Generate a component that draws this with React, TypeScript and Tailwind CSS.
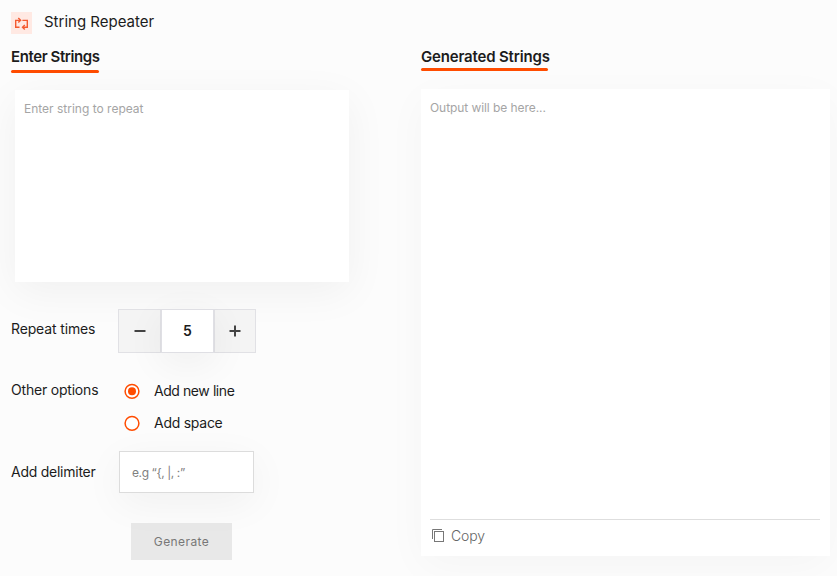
import { useState } from "react";

const options = [
  { id: "line", label: "Add new line", className: "tracking-[-0.43px]" },
  { id: "space", label: "Add space", className: "tracking-[-0.26px]" },
];

const RepeatSvg: React.FC = () => (
  <svg width="15" height="15" viewBox="0 0 15 15" fill="none" stroke="#f45a30" strokeWidth="1.4">
    <path d="M5.5 11.3H1.7V4.4H6" />
    <path d="M4.3 1.9L6.6 4.3L4.3 6.5" />
    <path d="M8.4 4.4H13.3V11.3H9" />
    <path d="M10.8 9L8.5 11.3L10.8 13.6" />
  </svg>
);

const CopySvg: React.FC = () => (
  <svg width="13" height="14" viewBox="0 0 13 14" fill="none" stroke="#777777">
    <path d="M0.5 10V0.5H10" />
    <rect x="2.5" y="2.5" width="9" height="10" />
  </svg>
);

const App: React.FC = () => {
  const [text, setText] = useState("");
  const [count, setCount] = useState(5);
  const [option, setOption] = useState("line");
  const [delimiter, setDelimiter] = useState("");

  return (
    <div className="h-[576px] w-[837px] overflow-hidden bg-[#fcfcfc] pt-3 pl-[11px] font-['Inter',sans-serif] text-[#1c1c1c]">
      <header className="flex h-[22px] items-center gap-3">
        <span className="flex h-[22px] w-[21px] items-center justify-center bg-[#ffe9e3]">
          <RepeatSvg />
        </span>
        <h1 className="-mt-0.5 text-[15px] leading-5">String Repeater</h1>
      </header>

      <main className="flex">
        <section className="w-[410px] shrink-0 pt-[13px]">
          <h2 className="h-[23px] text-[15px] leading-5 font-semibold tracking-[-0.4px] whitespace-nowrap">
            Enter Strings
          </h2>
          <div className="h-[3px] w-[88px] rounded-full bg-[#ff4c00]" />
          <textarea
            className="mt-[17px] ml-1 block h-[192px] w-[334px] resize-none bg-white px-[9px] py-2.5 text-xs leading-[18px] shadow-[0_10px_40px_rgba(0,0,0,0.05)] outline-none placeholder:text-[#a5a5a5]"
            placeholder="Enter string to repeat"
            value={text}
            onChange={(e) => setText(e.target.value)}
          />

          <div className="mt-[27px] flex h-11">
            <span className="w-[107px] pt-2.5 text-sm leading-5 tracking-[-0.14px]">Repeat times</span>
            <div className="flex">
              <button
                className="flex w-[43px] items-center justify-center border border-[#e1e1e5] bg-[#f4f4f4]"
                onClick={() => setCount(Math.max(1, count - 1))}
              >
                <svg width="12" height="12" stroke="#444444" strokeWidth="2">
                  <path d="M0.5 6H11.5" />
                </svg>
              </button>
              <span className="relative flex w-[53px] items-center justify-center border border-[#dfdfe4] bg-white text-sm font-semibold shadow-[0_10px_40px_rgba(0,0,0,0.06)]">
                {count}
              </span>
              <button
                className="flex w-[42px] items-center justify-center border border-[#e1e1e5] bg-[#f4f4f4]"
                onClick={() => setCount(count + 1)}
              >
                <svg width="12" height="12" stroke="#444444" strokeWidth="2">
                  <path d="M0.5 6H11.5M6 0.5V11.5" />
                </svg>
              </button>
            </div>
          </div>

          <div className="mt-[27px] flex h-[55px]">
            <span className="w-[113px] text-sm leading-5 tracking-[-0.2px]">Other options</span>
            <div className="flex flex-col gap-3 pt-px">
              {options.map((item) => (
                <button
                  key={item.id}
                  className="flex h-5 items-center gap-3.5"
                  onClick={() => setOption(item.id)}
                >
                  <svg width="16" height="16" viewBox="0 0 16 16">
                    <circle cx="8" cy="8.3" r="6.9" fill="#ffffff" stroke="#ff4c00" strokeWidth="1.5" />
                    {option === item.id && <circle cx="8" cy="8.3" r="4" fill="#ff4c00" />}
                  </svg>
                  <span className={`text-sm leading-5 ${item.className}`}>{item.label}</span>
                </button>
              ))}
            </div>
          </div>

          <div className="mt-4 flex h-[42px]">
            <span className="w-[108px] pt-[11px] text-sm leading-5 tracking-[-0.25px]">Add delimiter</span>
            <input
              className="w-[135px] border border-[#dcdcdc] bg-white px-3 pt-0.5 text-xs tracking-[-0.4px] shadow-[0_10px_40px_rgba(0,0,0,0.05)] outline-none placeholder:text-[#808080]"
              placeholder="e.g “{, |, :”"
              value={delimiter}
              onChange={(e) => setDelimiter(e.target.value)}
            />
          </div>

          <button className="mt-[30px] ml-[120px] block h-[37px] w-[101px] bg-[#e8e8e8] text-xs tracking-[0.4px] text-[#777777]">
            Generate
          </button>
        </section>

        <section className="w-[409px] shrink-0 pt-[13px]">
          <h2 className="h-[21px] text-[15px] leading-5 font-semibold tracking-[-0.17px] whitespace-nowrap">
            Generated Strings
          </h2>
          <div className="h-[3px] w-[127px] rounded-full bg-[#ff4c00]" />
          <div className="mt-[18px] flex h-[467px] flex-col bg-white px-[9px] shadow-[0_10px_40px_rgba(0,0,0,0.03)]">
            <p className="flex-1 pt-2.5 text-xs leading-[18px] tracking-[-0.07px] text-[#a5a5a5]">
              Output will be here...
            </p>
            <div className="h-[37px] w-[390px] border-t border-[#dedede]">
              <button className="mt-1.5 ml-0.5 flex h-5 items-center gap-1.5 text-sm font-light tracking-[-0.1px] text-[#666666]">
                <CopySvg />
                <span>Copy</span>
              </button>
            </div>
          </div>
        </section>
      </main>
    </div>
  );
};

export default App;
